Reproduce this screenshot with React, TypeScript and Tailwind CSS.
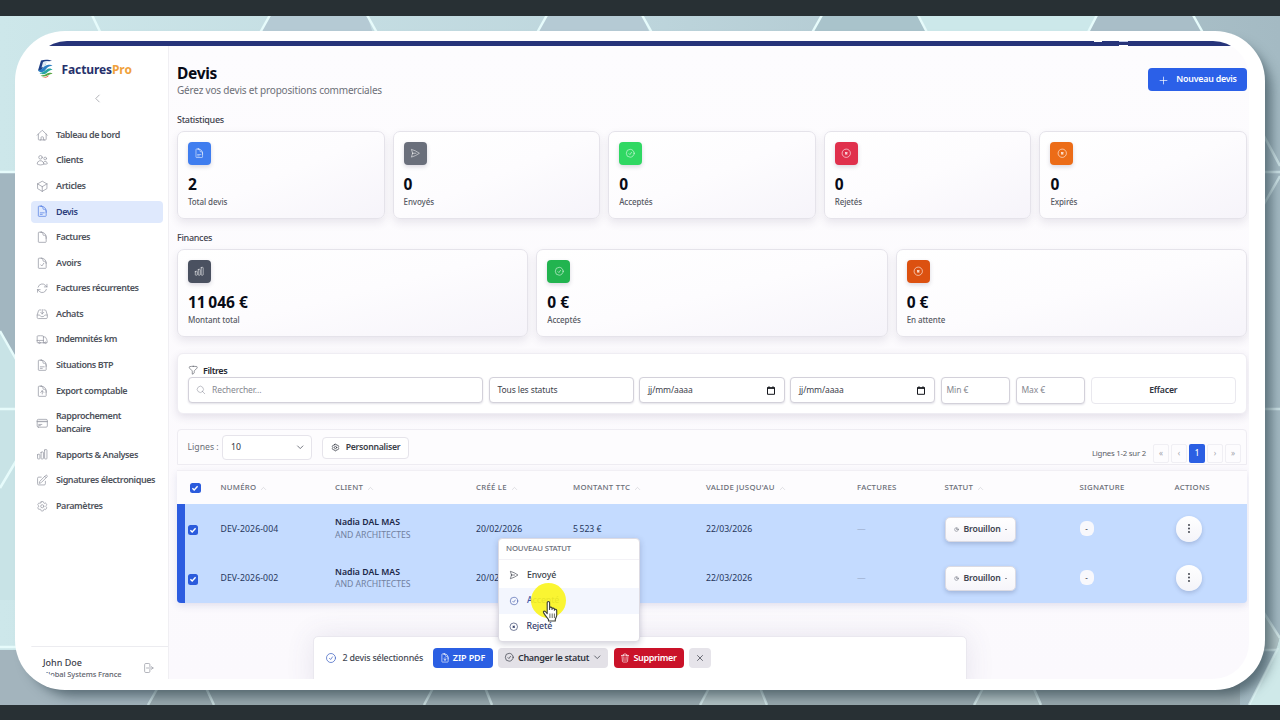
import type { ReactNode } from "react";
import type { IconType } from "react-icons";
import {
  HiOutlineHome,
  HiOutlineUsers,
  HiOutlineCube,
  HiOutlineDocumentText,
  HiOutlineDocument,
  HiOutlineDocumentCheck,
  HiOutlineArrowPath,
  HiOutlineInboxArrowDown,
  HiOutlineTruck,
  HiOutlineDocumentArrowUp,
  HiOutlineDocumentArrowDown,
  HiOutlineCreditCard,
  HiOutlineChartBar,
  HiOutlinePencilSquare,
  HiOutlineCog6Tooth,
  HiOutlineArrowRightOnRectangle,
  HiOutlinePaperAirplane,
  HiOutlineCheckCircle,
  HiOutlineFunnel,
  HiOutlineMagnifyingGlass,
  HiOutlineChevronDown,
  HiOutlineChevronLeft,
  HiOutlineChevronUp,
  HiOutlinePlus,
  HiOutlineTrash,
  HiOutlineXMark,
  HiOutlineClock,
} from "react-icons/hi2";

type IconComponent = IconType | ((props: { className?: string }) => ReactNode);

const nav: { label: ReactNode; icon: IconType; active?: boolean; tall?: boolean }[] = [
  { label: "Tableau de bord", icon: HiOutlineHome },
  { label: "Clients", icon: HiOutlineUsers },
  { label: "Articles", icon: HiOutlineCube },
  { label: "Devis", icon: HiOutlineDocumentText, active: true },
  { label: "Factures", icon: HiOutlineDocument },
  { label: "Avoirs", icon: HiOutlineDocumentCheck },
  { label: "Factures récurrentes", icon: HiOutlineArrowPath },
  { label: "Achats", icon: HiOutlineInboxArrowDown },
  { label: "Indemnités km", icon: HiOutlineTruck },
  { label: "Situations BTP", icon: HiOutlineDocumentText },
  { label: "Export comptable", icon: HiOutlineDocumentArrowUp },
  { label: <>Rapprochement<br />bancaire</>, icon: HiOutlineCreditCard, tall: true },
  { label: "Rapports & Analyses", icon: HiOutlineChartBar },
  { label: "Signatures électroniques", icon: HiOutlinePencilSquare },
  { label: "Paramètres", icon: HiOutlineCog6Tooth },
];

function RejectIcon({ className }: { className?: string }) {
  return (
    <svg className={className} viewBox="0 0 24 24" fill="none" stroke="currentColor" strokeWidth="1.700">
      <circle cx="12" cy="12" r="9.500" />
      <path d="M10.300 10.300L13.700 13.700M13.700 10.300L10.300 13.700" strokeWidth="2.600" strokeLinecap="round" />
    </svg>
  );
}

function Backdrop() {
  return (
    <svg className="absolute inset-0 h-full w-full" viewBox="0 0 1280 720" preserveAspectRatio="none">
      <defs>
        <linearGradient id="bg" x1="0" x2="1" y1="0" y2="0">
          <stop offset="0" stopColor="#cde7ea" />
          <stop offset="0.5" stopColor="#bdd5dc" />
          <stop offset="1" stopColor="#a4bac3" />
        </linearGradient>
      </defs>
      <rect width="1280" height="720" fill="url(#bg)" />
      <path d="M270 15 L255 40 H375 L367 15Z M547 15L534 40H652L642 15Z" fill="#b5cad4" />
      <path d="M1098 15L1085 40H1205L1193 15Z" fill="#a9bec8" />
      <path d="M822 15L808 40H930L918 15Z" fill="#a9c3cb" />
      <path d="M919 15L932 40H1083L1097 15Z" fill="#cce8ea" />
      <path d="M0 172H15V358L0 331Z" fill="#a2b6c0" />
      <path d="M0 331L20 366V600H0Z" fill="#c8e3e6" />
      <path d="M0 650H240V705H0Z" fill="#a3b4bd" />
      <path d="M148 705L162 680H1240V705Z" fill="#98a8ad" />
      <path d="M700 705L712 680H757L767 705Z M974 705L987 680H1029L1041 705Z" fill="#b0c0c2" />
      <path d="M1280 636V705H1249L1276 650Z" fill="#cfe9e9" />
      <path d="M1262 612L1280 636L1276 650H1262Z" fill="#b3c6c8" />
      <g stroke="#e6fbfb" strokeWidth="2.5" fill="none">
        <path d="M92 15L104 40 M270 15L256 40 M367 15L381 40 M547 15L533 40 M642 15L656 40 M822 15L808 40 M918 15L931 40 M1097 15L1084 40 M1193 15L1207 40" />
        <path d="M0 172H30 M0 331L25 375 M0 409H30 M0 488L25 446 M0 647H40" />
        <path d="M1264 136L1280 166 M1264 172H1280 M1264 204L1280 176 M1264 409H1280 M1264 613L1280 638 M1264 650H1276 M1249 705L1278 648" opacity="0.6" />
        <path d="M148 705L165 675 M200 675L214 705 M424 705L440 675 M480 675L492 705 M700 705L716 675 M755 675L767 705 M974 705L990 675 M1028 675L1041 705" opacity="0.6" />
      </g>
    </svg>
  );
}

function Logo() {
  return (
    <svg className="-mt-[1px] h-[20px] w-[17px]" viewBox="0 0 17 20">
      <path d="M4 1.500C8 .3 12 .5 15.500 2.200C12 1.800 9.500 2.500 8.500 5.500L3.500 12L1 11.500Z" fill="#1f3f86" />
      <path d="M6 3C8 2 10.500 1.800 12.500 2.500C9.500 3.500 8.500 5 7.500 8L4.500 8.500Z" fill="#dbeaf4" />
      <path d="M1 11.500C5 11.500 6 7 10.500 6C12.500 5.500 14.500 6 15.500 7C11 7 10 9 8 11.500C6 13.500 3 14 1 11.500Z" fill="#2a7fc4" />
      <path d="M2.500 14C7 14 8.500 10 12 9.500C13.500 9.300 15 10 15.500 11C12 11 11 13 9 14.500C7 15.500 4 15.500 2.500 14Z" fill="#27a5a0" />
      <path d="M3.500 16.500C8 16.700 9.500 14.200 12.500 13.800C14 13.700 15 14.200 15.500 15C12 15 11 17 7 17.500C5.500 17.600 4.500 17.300 3.500 16.500Z" fill="#59a744" />
      <path d="M5 18.300C8 18.500 10 17.600 12 16.300C11 18.300 9 19.500 5 18.300Z" fill="#e2523a" />
    </svg>
  );
}

function Sidebar() {
  return (
    <aside className="flex w-[138px] shrink-0 flex-col border-r border-[#f0eff3] bg-white">
      <div className="flex h-[47px] items-center pl-[6px]">
        <Logo />
        <div className="ml-[7.500px] text-[12px] font-bold tracking-[-0.1px] text-[#26306b]">
          Factures<span className="text-[#f0a13c]">Pro</span>
        </div>
      </div>
      <div className="flex h-[11px] items-center justify-center pr-[5px]">
        <HiOutlineChevronLeft className="h-[11px] w-[11px] text-[#8d8f96]" />
      </div>
      <nav className="mt-[19.800px] flex flex-col gap-[3.200px] pr-[5px]">
        {nav.map((n, i) => (
          <div
            key={i}
            className={`flex shrink-0 items-center rounded-[4px] pl-[5px] ${n.tall ? "h-[35.200px]" : "h-[22.400px]"} ${
              n.active ? "bg-[#dfe9fd] text-[#2b3d7c]" : "text-[#4f535c]"
            }`}
          >
            <n.icon className={`h-[12.500px] w-[12.500px] ${n.active ? "text-[#5f86e6]" : "text-[#9a9ca6]"}`} />
            <span className="ml-[7.500px] pt-[0.500px] text-[9px] leading-[12.800px] font-semibold tracking-[-0.420px] whitespace-nowrap">
              {n.label}
            </span>
          </div>
        ))}
      </nav>
      <div className="mt-auto flex h-[33px] shrink-0 items-start border-t border-[#ececf0] pl-[12px]">
        <div className="pt-[10px]">
          <div className="text-[9px] leading-[12px] font-medium text-[#3c4049]">John Doe</div>
          <div className="text-[7.500px] leading-[11px] font-medium tracking-[-0.100px] text-[#5d616b]">Global Systems France</div>
        </div>
        <HiOutlineArrowRightOnRectangle className="mt-[15px] mr-[14px] ml-auto h-[12px] w-[12px] text-[#9a9ca6]" />
      </div>
    </aside>
  );
}

function StatCard({ icon: Icon, color, value, label }: { icon: IconComponent; color: string; value: string; label: string }) {
  return (
    <div className="h-[88px] flex-1 rounded-[7px] border-[1.500px] border-[#e5e3ea] bg-gradient-to-br from-white via-[#fdfcfe] to-[#f6f4fa] pt-[10px] pl-[10px] shadow-[0_4px_9px_rgba(60,50,90,0.10)]">
      <div className={`flex h-[23px] w-[23px] items-center justify-center rounded-[4px] shadow-[0_2px_4px_rgba(60,50,90,0.18)] ${color}`}>
        <Icon className="h-[10.500px] w-[10.500px] text-white/80" />
      </div>
      <div className="mt-[9px] text-[15.500px] leading-[20px] font-bold text-[#080b16]">{value}</div>
      <div className="mt-[2px] text-[8px] leading-[11px] font-medium tracking-[-0.100px] text-[#565963]">{label}</div>
    </div>
  );
}

function CalendarIcon() {
  return (
    <svg className="h-[9px] w-[8px]" viewBox="0 0 8 9">
      <path d="M0.500 2H7.500V8.300H0.500Z" fill="none" stroke="#15171d" />
      <path d="M0 1.200H8V2.700H0Z M1.500 0.300H2.500V1.500H1.500Z M5.500 0.300H6.500V1.500H5.500Z" fill="#15171d" />
    </svg>
  );
}

function Field({ className, children }: { className: string; children: ReactNode }) {
  return (
    <div className={`flex shrink-0 items-center rounded-[4px] border-[1.500px] border-[#d3d1da] bg-white text-[8.500px] tracking-[-0.100px] shadow-[0_1px_2px_rgba(60,50,90,0.14)] ${className}`}>
      {children}
    </div>
  );
}

function Checkbox() {
  return (
    <div className="flex h-[10.500px] w-[10.500px] items-center justify-center rounded-[2.500px] bg-[#2b5bdc]">
      <svg className="h-[8px] w-[8px]" viewBox="0 0 8 8">
        <path d="M1.400 4.200L3.200 6L6.600 2.200" fill="none" stroke="#fff" strokeWidth="1.400" />
      </svg>
    </div>
  );
}

const cols =
  "grid grid-cols-[114.500px_141px_97px_133px_151px_87.500px_135px_95px_1fr] flex-1 items-center";

const heads: [string, boolean][] = [
  ["NUMÉRO", true],
  ["CLIENT", true],
  ["CRÉÉ LE", true],
  ["MONTANT TTC", true],
  ["VALIDE JUSQU'AU", true],
  ["FACTURES", false],
  ["STATUT", true],
  ["SIGNATURE", false],
  ["ACTIONS", false],
];

function Row({ num }: { num: string }) {
  return (
    <div className="flex h-[49.300px] items-center text-[8.700px] text-[#27375c]">
      <div className="h-full w-[8px] bg-[#2c5ce0]" />
      <div className="mt-[3px] ml-[2.500px] w-[33px]">
        <Checkbox />
      </div>
      <div className={cols}>
        <div className="pt-[1px] tracking-[0.080px]">{num}</div>
        <div className="pt-[1px] leading-[12.800px]">
          <div className="font-semibold text-[#1b2747]">Nadia DAL MAS</div>
          <div className="tracking-[-0.050px] text-[#71819f]">AND ARCHITECTES</div>
        </div>
        <div className="pt-[1px]">20/02/2026</div>
        <div className="pt-[1px]">5&#8239;523 €</div>
        <div className="pt-[1px]">22/03/2026</div>
        <div className="pt-[1px] text-[#93a5c4]">—</div>
        <div>
          <div className="mt-[1px] ml-[0.500px] flex h-[25px] w-[71px] items-center justify-center gap-[4px] rounded-[5px] border border-[#dcdbe3] bg-gradient-to-b from-white to-[#f6f5fa] font-semibold tracking-[-0.150px] text-[#40444f] shadow-[0_2px_4px_rgba(40,50,90,0.22)]">
            <HiOutlineClock className="h-[5px] w-[5px] stroke-[2.500] text-[#6c707b]" />
            <span>Brouillon</span>
            <span className="h-px w-[2px] bg-[#8e919b]" />
          </div>
        </div>
        <div>
          <div className="flex h-[15px] w-[14px] items-center justify-center rounded-[6px] bg-[#f8f8fc] text-[8px] text-[#40444f]">-</div>
        </div>
        <div>
          <div className="ml-[1.500px] flex h-[26px] w-[26px] items-center justify-center rounded-full bg-gradient-to-b from-white to-[#f4f4f9] shadow-[0_2px_4px_rgba(40,50,90,0.2)]">
            <svg className="h-[9px] w-[4px]" viewBox="0 0 4 9" fill="#2f333d">
              <circle cx="2" cy="1" r="0.900" />
              <circle cx="2" cy="4.500" r="0.900" />
              <circle cx="2" cy="8" r="0.900" />
            </svg>
          </div>
        </div>
      </div>
    </div>
  );
}

function StatusMenu() {
  return (
    <div className="absolute bottom-[26px] left-0 h-[104px] w-[142px] rounded-[4px] border border-[#dddbe3] bg-white shadow-[0_2px_6px_rgba(40,40,80,0.22)]">
      <div className="flex h-[21px] items-center border-b border-[#f3f2f6] pl-[7px] text-[7.800px] font-medium text-[#6d707a]">
        NOUVEAU STATUT
      </div>
      <div className="pt-[3px] text-[8.800px] font-medium tracking-[-0.150px] text-[#3b3f4a]">
        <div className="flex h-[25.600px] items-center pl-[10px]">
          <HiOutlinePaperAirplane className="mr-[8px] h-[10px] w-[10px]" />
          Envoyé
        </div>
        <div className="flex h-[25.600px] items-center bg-[#f3f6fe] pl-[10px] text-[#3f56a6]">
          <HiOutlineCheckCircle className="mr-[8px] h-[10px] w-[10px]" />
          Accepté
        </div>
        <div className="flex h-[25.600px] items-center pl-[10px] text-[#36416b]">
          <RejectIcon className="mr-[8px] h-[9.500px] w-[9.500px]" />
          Rejeté
        </div>
      </div>
      <div className="absolute top-[44.500px] left-[31.500px] h-[35px] w-[35px] rounded-full bg-[#fbf51c]/90" />
      <svg className="absolute top-[61px] left-[43px] h-[23px] w-[18px]" viewBox="0 0 18 23">
        <path
          d="M5.200 2.500C5.200 1.200 7.600 1.200 7.600 2.500V9.500V7.800C7.800 6.800 9.900 7 10 8V9.500V8.700C10.300 7.700 12.300 8 12.400 9V10.300V9.800C12.700 9 14.700 9.200 14.700 10.600V15.200C14.700 17 13.500 18 13.300 19.500V21H6.500V19.500C5 17.500 3.500 16 1.500 12.600C1 11.500 2.400 10.700 3.300 11.500L5.200 13.600Z"
          fill="#fff"
          stroke="#3a3f38"
          strokeWidth="1.100"
          strokeLinejoin="round"
        />
        <path d="M7.900 13.500V18M10.200 13.500V18M12.400 13.500V18" stroke="#55594f" strokeWidth="0.900" />
      </svg>
    </div>
  );
}

function Main() {
  return (
    <main className="flex min-w-0 flex-1 flex-col bg-gradient-to-b from-[#fdfcfe] to-[#fbf9fd] pr-[2px] pl-[8px]">
      <header className="flex h-[66px] shrink-0 items-start justify-between pt-[17px]">
        <div>
          <h1 className="text-[15.500px] leading-[20px] font-bold tracking-[-0.300px] text-[#080b16]">Devis</h1>
          <p className="text-[10px] leading-[14px] tracking-[-0.190px] text-[#6d7078]">Gérez vos devis et propositions commerciales</p>
        </div>
        <button className="mt-[5px] flex h-[23px] w-[99px] items-center justify-center gap-[7px] rounded-[4px] bg-[#2b60e8] pt-px text-[8.800px] font-semibold tracking-[-0.200px] text-white">
          <HiOutlinePlus className="h-[11px] w-[11px]" />
          Nouveau devis
        </button>
      </header>

      <h2 className="h-[19px] shrink-0 pt-px text-[9px] leading-[14px] font-medium tracking-[-0.300px] text-[#3f434d]">Statistiques</h2>
      <div className="flex shrink-0 gap-[8px]">
        <StatCard icon={HiOutlineDocumentText} color="bg-[#3f7def]" value="2" label="Total devis" />
        <StatCard icon={HiOutlinePaperAirplane} color="bg-[#6a6f7b]" value="0" label="Envoyés" />
        <StatCard icon={HiOutlineCheckCircle} color="bg-[#30d863]" value="0" label="Acceptés" />
        <StatCard icon={RejectIcon} color="bg-[#e0304c]" value="0" label="Rejetés" />
        <StatCard icon={RejectIcon} color="bg-[#ec6c17]" value="0" label="Expirés" />
      </div>

      <h2 className="mt-[11px] h-[19px] shrink-0 pt-px text-[9px] leading-[14px] font-medium tracking-[-0.300px] text-[#3f434d]">Finances</h2>
      <div className="flex shrink-0 gap-[8px]">
        <StatCard icon={HiOutlineChartBar} color="bg-[#4a5160]" value={"11\u202f046 €"} label="Montant total" />
        <StatCard icon={HiOutlineCheckCircle} color="bg-[#22b44f]" value="0 €" label="Acceptés" />
        <StatCard icon={RejectIcon} color="bg-[#dc5110]" value="0 €" label="En attente" />
      </div>

      <section className="mt-[16px] h-[61px] shrink-0 rounded-[6px] border border-[#efedf3] bg-white pt-[10px] pr-[10px] pl-[9.500px] shadow-[0_3px_8px_rgba(60,50,90,0.13)]">
        <div className="flex h-[13px] items-center gap-[5px] text-[9px] font-semibold tracking-[-0.400px] text-[#23262f]">
          <HiOutlineFunnel className="h-[10.500px] w-[10.500px] text-[#5b5e68]" />
          Filtres
        </div>
        <div className="flex items-start gap-[5.500px] text-[#3d414b]">
          <Field className="h-[26px] w-[295.500px] pl-[7px] text-[#85878f]">
            <HiOutlineMagnifyingGlass className="mr-[6.500px] h-[10px] w-[10px] text-[#9a9ca6]" />
            Rechercher...
          </Field>
          <Field className="h-[26px] w-[145px] pl-[8px]">Tous les statuts</Field>
          <Field className="h-[26px] w-[145.500px] justify-between pr-[9px] pl-[8px]">
            jj/mm/aaaa
            <CalendarIcon />
          </Field>
          <Field className="h-[26px] w-[145px] justify-between pr-[9px] pl-[8px]">
            jj/mm/aaaa
            <CalendarIcon />
          </Field>
          <Field className="h-[27px] w-[69.500px] pl-[5px] text-[#85878f]">Min €</Field>
          <Field className="h-[27px] w-[69.500px] pl-[5px] text-[#85878f]">Max €</Field>
          <div className="flex h-[27px] flex-1 items-center justify-center rounded-[4px] border border-[#e9e8ee] pt-px text-[8.700px] font-semibold tracking-[-0.200px] text-[#30343e]">
            Effacer
          </div>
        </div>
      </section>

      <section className="mt-[15px] flex h-[36px] shrink-0 items-center rounded-t-[4px] border border-[#eeecf2] bg-[#fdfcfe] pl-[9.500px] text-[8.700px]">
        <span className="w-[34.500px] pt-px text-[#6a6d76]">Lignes :</span>
        <div className="mt-[1px] flex h-[24.500px] w-[90px] items-center justify-between rounded-[4px] border border-[#e6e4eb] bg-white pr-[7px] pl-[8px] text-[#30343e]">
          10
          <HiOutlineChevronDown className="h-[8.500px] w-[8.500px] stroke-[2] text-[#40444f]" />
        </div>
        <div className="mt-[1px] ml-[10px] flex h-[22px] w-[87px] items-center justify-center gap-[6px] rounded-[4px] border border-[#e6e4eb] bg-white font-semibold tracking-[-0.270px] text-[#3a3e48]">
          <HiOutlineCog6Tooth className="h-[9px] w-[9px] stroke-[2]" />
          Personnaliser
        </div>
        <div className="mt-[12px] mr-[5px] ml-auto flex items-center text-[7.800px] tracking-[-0.220px] text-[#5a5d67]">
          <span className="mr-[7px] pt-px">Lignes 1-2 sur 2</span>
          <div className="flex gap-[2px] text-[8px] text-[#a3a4ac]">
            <span className="flex h-[19px] w-[16px] items-center justify-center rounded-[2px] border border-[#f0eff4]">«</span>
            <span className="flex h-[19px] w-[16px] items-center justify-center rounded-[2px] border border-[#f0eff4]">‹</span>
            <span className="flex h-[19px] w-[16px] items-center justify-center rounded-[2px] bg-[#2b5fe3] font-medium text-white">1</span>
            <span className="flex h-[19px] w-[16px] items-center justify-center rounded-[2px] border border-[#f0eff4]">›</span>
            <span className="flex h-[19px] w-[16px] items-center justify-center rounded-[2px] border border-[#f0eff4]">»</span>
          </div>
        </div>
      </section>

      <section className="mt-[5px] shrink-0 overflow-hidden rounded-b-[4px] border-t border-[#f1eff4] bg-[#c4dbff] shadow-[0_3px_7px_rgba(60,70,140,0.13)]">
        <div className="flex h-[33px] items-center bg-[#fdfcfe] pl-[13px] text-[7.800px] font-medium text-[#6b6e78]">
          <div className="w-[30.500px] pt-px">
            <Checkbox />
          </div>
          <div className={cols}>
            {heads.map(([label, sortable]) => (
              <div key={label} className="flex items-center gap-[4px] pt-px tracking-[0.250px]">
                {label}
                {sortable && <HiOutlineChevronUp className="h-[7px] w-[7px] text-[#bbbcc4]" />}
              </div>
            ))}
          </div>
        </div>
        <Row num="DEV-2026-004" />
        <Row num="DEV-2026-002" />
      </section>

      <section className="mt-[33px] ml-[135.500px] flex h-[60px] w-[654.500px] shrink-0 items-start rounded-t-[5px] border border-[#eae8ef] bg-white pt-[11px] pl-[11px] shadow-[0_0_28px_rgba(80,70,120,0.12)]">
        <div className="flex h-[20px] w-[108px] items-center gap-[6px] text-[8.900px] font-medium tracking-[-0.200px] whitespace-nowrap text-[#454954]">
          <HiOutlineCheckCircle className="h-[12px] w-[12px] text-[#4467c4]" />
          2 devis sélectionnés
        </div>
        <div className="flex gap-[5.500px] text-[9px] font-semibold tracking-[-0.150px] text-white">
          <button className="flex h-[20px] w-[60px] items-center justify-center gap-[3px] rounded-[4px] bg-[#2b5fe3]">
            <HiOutlineDocumentArrowDown className="h-[10px] w-[10px]" />
            ZIP PDF
          </button>
          <div className="relative">
            <button className="flex h-[20px] w-[110px] items-center justify-center gap-[3px] rounded-[4px] bg-[#e3e1e7] text-[#30343e]">
              <HiOutlineCheckCircle className="h-[10.500px] w-[10.500px]" />
              <span className="tracking-[-0.300px]">Changer le statut</span>
              <HiOutlineChevronDown className="ml-[1px] h-[8.500px] w-[8.500px] stroke-[2]" />
            </button>
            <StatusMenu />
          </div>
          <button className="flex h-[20px] w-[70px] items-center justify-center gap-[3px] rounded-[4px] bg-[#ca1229] tracking-[-0.350px]">
            <HiOutlineTrash className="h-[10px] w-[10px]" />
            Supprimer
          </button>
          <button className="flex h-[20px] w-[22px] items-center justify-center rounded-[4px] bg-[#e6e4ea] text-[#50535d]">
            <HiOutlineXMark className="h-[10px] w-[10px] stroke-[2]" />
          </button>
        </div>
      </section>
    </main>
  );
}

export default function App() {
  return (
    <div className="relative flex h-[720px] w-[1280px] flex-col overflow-hidden bg-[#283034] font-['Noto_Sans',sans-serif]">
      <Backdrop />
      <div className="relative h-[15.500px] shrink-0 bg-[#283034]" />
      <div className="relative h-[689.500px] shrink-0 overflow-hidden px-[15px] pt-[15.500px]">
        <div className="h-[658.500px] rounded-[50px] bg-white pt-[10px] pr-[16px] pl-[16px] shadow-[9px_9px_12px_-3px_rgba(40,60,70,0.6)]">
          <div className="flex h-[638px] flex-col overflow-hidden rounded-[36px]">
            <div className="flex h-[5px] shrink-0 items-start justify-end gap-[17px] bg-[#27347a] pr-[121px]">
              <span className="h-px w-[8px] bg-white" />
              <span className="flex h-[5px] w-[9px] flex-col justify-between">
                <span className="h-px bg-[#bcc6e6]" />
                <span className="h-px bg-white" />
              </span>
            </div>
            <div className="flex min-h-0 flex-1">
              <Sidebar />
              <Main />
            </div>
          </div>
        </div>
      </div>
      <div className="relative flex-1 bg-[#283034]" />
    </div>
  );
}
